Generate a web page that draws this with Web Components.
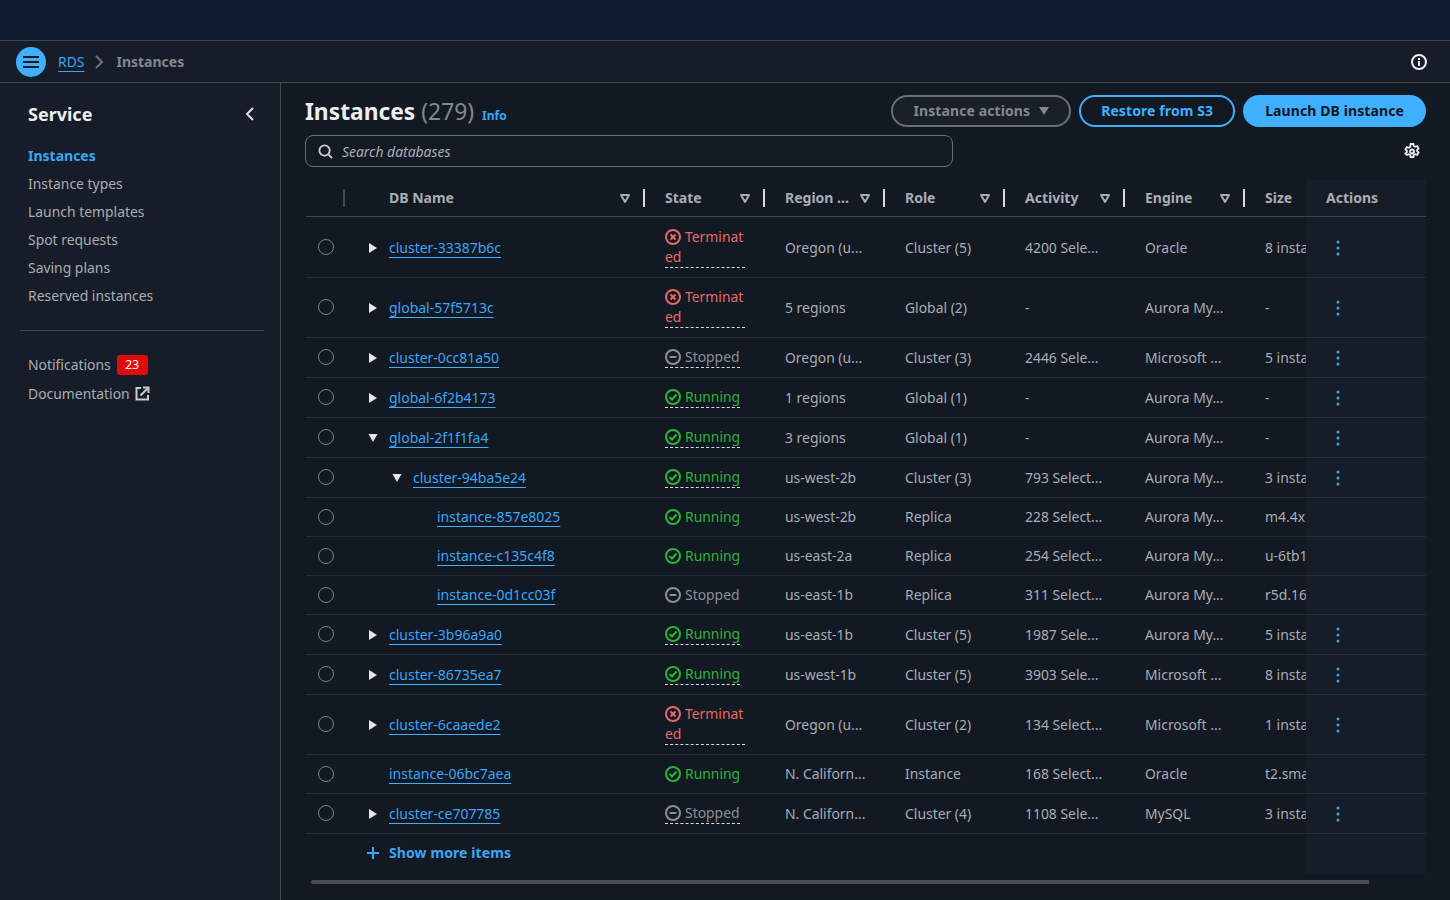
<!DOCTYPE html>
<html lang="en">
<head>
<meta charset="utf-8">
<title>Instances</title>
<style>
	html, body { margin:0; height:100%; background:#121923; overflow:hidden; }
	body { font-family:"Noto Sans", "Open Sans", sans-serif; font-size:13.92px; line-height:20px; color:#a9adb4; }
	app-shell { height:900px; }
</style>
</head>
<body>

<app-shell>
	<side-nav slot="nav"></side-nav>
	<page-header></page-header>
	<search-row></search-row>
	<db-table>
		<db-row name="cluster-33387b6c" caret="right" state="Terminated" tip region="Oregon (u..." role="Cluster (5)" activity="4200 Sele..." engine="Oracle" size="8 instances" menu></db-row>
		<db-row name="global-57f5713c" caret="right" state="Terminated" tip region="5 regions" role="Global (2)" activity="-" engine="Aurora My..." size="-" menu></db-row>
		<db-row name="cluster-0cc81a50" caret="right" state="Stopped" tip region="Oregon (u..." role="Cluster (3)" activity="2446 Sele..." engine="Microsoft ..." size="5 instances" menu></db-row>
		<db-row name="global-6f2b4173" caret="right" state="Running" tip region="1 regions" role="Global (1)" activity="-" engine="Aurora My..." size="-" menu></db-row>
		<db-row name="global-2f1f1fa4" caret="down" state="Running" tip region="3 regions" role="Global (1)" activity="-" engine="Aurora My..." size="-" menu></db-row>
		<db-row name="cluster-94ba5e24" level="1" caret="down" state="Running" tip region="us-west-2b" role="Cluster (3)" activity="793 Select..." engine="Aurora My..." size="3 instances" menu></db-row>
		<db-row name="instance-857e8025" level="2" state="Running" region="us-west-2b" role="Replica" activity="228 Select..." engine="Aurora My..." size="m4.4xlarge"></db-row>
		<db-row name="instance-c135c4f8" level="2" state="Running" region="us-east-2a" role="Replica" activity="254 Select..." engine="Aurora My..." size="u-6tb1.metal"></db-row>
		<db-row name="instance-0d1cc03f" level="2" state="Stopped" region="us-east-1b" role="Replica" activity="311 Select..." engine="Aurora My..." size="r5d.16xlarge"></db-row>
		<db-row name="cluster-3b96a9a0" caret="right" state="Running" tip region="us-east-1b" role="Cluster (5)" activity="1987 Sele..." engine="Aurora My..." size="5 instances" menu></db-row>
		<db-row name="cluster-86735ea7" caret="right" state="Running" tip region="us-west-1b" role="Cluster (5)" activity="3903 Sele..." engine="Microsoft ..." size="8 instances" menu></db-row>
		<db-row name="cluster-6caaede2" caret="right" state="Terminated" tip region="Oregon (u..." role="Cluster (2)" activity="134 Select..." engine="Microsoft ..." size="1 instance" menu></db-row>
		<db-row name="instance-06bc7aea" state="Running" region="N. Californ..." role="Instance" activity="168 Select..." engine="Oracle" size="t2.small"></db-row>
		<db-row name="cluster-ce707785" caret="right" state="Stopped" tip region="N. Californ..." role="Cluster (4)" activity="1108 Sele..." engine="MySQL" size="3 instances" menu></db-row>
	</db-table>
</app-shell>

<script>
	// shared column sizes, every table row uses the same grid
	const COLS = "39px 300px 120px 120px 120px 120px 120px 61px 120px";

	class AppShell extends HTMLElement {
		constructor() {
			super();
			this.attachShadow({mode:"open"}).innerHTML = `<style>
				:host { display:flex; flex-direction:column; height:100%; }
				.top { height:40px; flex:none; background:linear-gradient(#0e1a2c, #0f1b2e); border-bottom:1px solid #424650; }
				.crumbs { height:41px; flex:none; display:flex; align-items:center; padding:0 23px 0 16px; background:#171d28; border-bottom:1px solid #424650; }
				.burger { width:30px; height:30px; border-radius:50%; background:#3fb0ff; display:flex; align-items:center; justify-content:center; margin-right:12px; }
				a { color:#3aa6f5; text-decoration:underline; text-underline-offset:4px; }
				.sep { margin:0 12px 0 10px; display:flex; }
				b { color:#83878e; font-size:14px; font-weight:700; }
				.info { margin-left:auto; display:flex; }
				.body { flex:1; display:flex; min-height:0; }
				.main { flex:1; min-width:0; padding:12px 24px 0; display:flex; flex-direction:column; }
				nav { flex:none; width:280px; background:#171d28; border-right:1px solid #424650; }
			</style>
			<div class="top"></div>
			<div class="crumbs">
				<span class="burger"><svg width="18" height="14" viewBox="0 0 18 14"><path d="M1 2h16M1 7h16M1 12h16" stroke="#0f1722" stroke-width="2"/></svg></span>
				<a>RDS</a>
				<span class="sep"><svg width="10" height="14" viewBox="0 0 10 14"><path d="M2 1l6 6-6 6" fill="none" stroke="#6f737a" stroke-width="2"/></svg></span>
				<b>Instances</b>
				<span class="info"><svg width="16" height="16" viewBox="0 0 16 16"><circle cx="8" cy="8" r="7" fill="none" stroke="#eceef0" stroke-width="2"/><path d="M8 7v5" stroke="#eceef0" stroke-width="2"/><path d="M8 4v2" stroke="#eceef0" stroke-width="2"/></svg></span>
			</div>
			<div class="body">
				<nav><slot name="nav"></slot></nav>
				<div class="main"><slot></slot></div>
			</div>`;
		}
	}

	class SideNav extends HTMLElement {
		constructor() {
			super();
			this.attachShadow({mode:"open"}).innerHTML = `<style>
				:host { display:block; padding:19px 16px 0 20px; color:#a9adb4; }
				.head { display:flex; align-items:center; justify-content:space-between; padding:0 9px 0 8px; height:24px; margin-bottom:16px; }
				h2 { margin:0; font-size:18px; font-weight:700; color:#eceef0; }
				ul { list-style:none; margin:0; padding:0 0 0 8px; }
				li { height:28px; line-height:28px; }
				.on { color:#3aa6f5; font-size:14px; font-weight:700; }
				hr { border:0; border-top:1px solid #424650; margin:20px 0 19px; }
				.extra li { height:29px; line-height:29px; display:flex; align-items:center; }
				.badge { background:#e00b0b; color:#fff; font-size:12px; line-height:20px; width:31px; text-align:center; border-radius:3px; margin-left:6px; }
				svg { display:block; }
				.ext { margin-left:5px; }
			</style>
			<div class="head">
				<h2>Service</h2>
				<svg width="10" height="14" viewBox="0 0 10 14"><path d="M8 1L2 7l6 6" fill="none" stroke="#dfe1e4" stroke-width="2"/></svg>
			</div>
			<ul>
				<li class="on">Instances</li>
				<li>Instance types</li>
				<li>Launch templates</li>
				<li>Spot requests</li>
				<li>Saving plans</li>
				<li>Reserved instances</li>
			</ul>
			<hr>
			<ul class="extra">
				<li>Notifications <span class="badge">23</span></li>
				<li>Documentation <svg class="ext" width="15" height="15" viewBox="0 0 15 15" fill="none" stroke="#c9ccd0" stroke-width="2"><path d="M6 2H1.500v11.500H13V9"/><path d="M5.500 9.500l7-7"/><path d="M8 1.500h5.500V7"/></svg></li>
			</ul>`;
		}
	}

	class PageHeader extends HTMLElement {
		constructor() {
			super();
			this.attachShadow({mode:"open"}).innerHTML = `<style>
				:host { display:flex; align-items:center; height:32px; flex:none; }
				h1 { margin:0; padding-top:2px; font-size:22.800px; line-height:30px; font-weight:700; color:#eceef0; }
				h1 span { font-weight:400; color:#83878e; }
				.info { color:#3aa6f5; font-size:12px; font-weight:700; margin:9px auto 0 8px; }
				button { font:inherit; font-size:14px; font-weight:700; letter-spacing:.1px; height:32px; border-radius:16px; padding:0 20px; margin-left:8px; border:2px solid; background:transparent; display:flex; align-items:center; box-sizing:border-box; }
				.dis { color:#83878e; border-color:#6b6f76; background:#1a2029; padding-right:19px; }
				.dis svg { margin-left:8px; }
				.line { color:#3fb0ff; border-color:#3fb0ff; }
				.fill { color:#0f1722; border-color:#3fb0ff; background:#3fb0ff; }
			</style>
			<h1>Instances <span>(279)</span></h1>
			<span class="info">Info</span>
			<button class="dis">Instance actions<svg width="12" height="10" viewBox="0 0 12 10"><path d="M1 1h10L6 9z" fill="#83878e"/></svg></button>
			<button class="line">Restore from S3</button>
			<button class="fill">Launch DB instance</button>`;
		}
	}

	class SearchRow extends HTMLElement {
		constructor() {
			super();
			this.attachShadow({mode:"open"}).innerHTML = `<style>
				:host { display:flex; align-items:center; justify-content:space-between; margin-top:8px; height:32px; flex:none; }
				.box { width:648px; height:32px; box-sizing:border-box; border:1px solid #6b6f76; border-radius:8px; background:#141a24; display:flex; align-items:center; padding:1px 0 0 12px; color:#a9adb4; font-style:italic; }
				.box svg { margin:-1px 9px 0 0; }
				.gear { margin-right:6px; display:block; }
			</style>
			<div class="box">
				<svg width="15" height="15" viewBox="0 0 16 16" fill="none" stroke="#c9ccd0" stroke-width="2"><circle cx="7" cy="7" r="5.500"/><path d="M11 11l4 4"/></svg>
				Search databases
			</div>
			<svg class="gear" width="16" height="16" viewBox="0 0 16 16" fill="none" stroke="#eceef0" stroke-width="1.800"><path d="M6.600 1h2.800l.4 2 1.500.8 1.900-.7 1.400 2.400-1.500 1.300v1.400l1.500 1.300-1.400 2.400-1.900-.7-1.500.8-.4 2H6.600l-.4-2-1.500-.8-1.900.7L1.400 10.500l1.500-1.300V7.800L1.400 6.500l1.400-2.400 1.900.7 1.500-.8z"/><circle cx="8" cy="8.500" r="2"/></svg>`;
		}
	}

	class DbTable extends HTMLElement {
		constructor() {
			super();
			const heads = [["State"], ["Region ..."], ["Role"], ["Activity"], ["Engine"]]
				.map(h => `<div class="th"><span>${h[0]}</span>${DbTable.filterIcon}<i></i></div>`).join("");
			this.attachShadow({mode:"open"}).innerHTML = `<style>
				:host { display:block; margin-top:13px; margin-left:1px; flex:none; }
				.head, .more { display:grid; grid-template-columns:${COLS}; font-size:14px; }
				.head { height:37px; box-sizing:border-box; border-bottom:1px solid #424650; font-weight:700; color:#a9adb4; }
				.th { display:flex; align-items:center; padding-left:20px; min-width:0; overflow:hidden; }
				.th span { flex:1; white-space:nowrap; overflow:hidden; }
				.th svg { flex:none; margin-left:10px; }
				.th i { flex:none; width:2px; height:18px; background:#d9dbde; margin-left:13px; }
				.sel { display:flex; align-items:center; justify-content:flex-end; }
				.sel i { width:2px; height:18px; background:#424650; }
				.name { padding-left:44px; }
				.act { background:#171d28; display:flex; align-items:center; padding-left:20px; }
				.rows { padding-top:1px; }
				.more { height:40px; font-weight:700; color:#3aa6f5; }
				.more .txt { grid-column:1 / 8; display:flex; align-items:center; padding:0 0 2px 60px; letter-spacing:.1px; }
				.more svg { margin-right:9px; }
				.bar { height:4px; margin:6px 57px 0 5px; background:#4a4c50; border-radius:4px 0 0 4px; }
			</style>
			<div class="head">
				<div class="sel"><i></i></div>
				<div class="th name"><span>DB Name</span>${DbTable.filterIcon}<i></i></div>
				${heads}
				<div class="th"><span>Size</span></div>
				<div class="act">Actions</div>
			</div>
			<div class="rows"><slot></slot></div>
			<div class="more">
				<div class="txt"><svg width="14" height="14" viewBox="0 0 14 14"><path d="M7 1v12M1 7h12" stroke="#3aa6f5" stroke-width="2"/></svg>Show more items</div>
				<div></div>
				<div class="act"></div>
			</div>
			<div class="bar"></div>`;
		}
		static get filterIcon() {
			return `<svg width="10" height="9" viewBox="0 0 10 9"><path d="M1 1h8L5 8z" fill="none" stroke="#a9adb4" stroke-width="2" stroke-linejoin="round"/></svg>`;
		}
	}

	class StatusMark extends HTMLElement {
		static get icons() {
			return {
				Terminated:{c:"#e86868", p:`<path d="M5.500 5.500l5 5M10.500 5.500l-5 5" stroke-width="2"/>`},
				Running:{c:"#2bb534", p:`<path d="M4.500 8l2.500 2.500 4.500-5" stroke-width="2"/>`},
				Stopped:{c:"#8d9096", p:`<path d="M4.500 8h7" stroke-width="2"/>`}
			};
		}
		constructor() {
			super();
			this.attachShadow({mode:"open"});
		}
		connectedCallback() {
			const label = this.getAttribute("label");
			const ic = StatusMark.icons[label];
			this.shadowRoot.innerHTML = `<style>
				:host { display:inline-block; max-width:100%; color:${ic.c}; word-break:break-all; }
				:host([tip]) { border-bottom:1px dashed #d9dbde; }
				svg { vertical-align:-3px; margin-right:4px; }
			</style><svg width="16" height="16" viewBox="0 0 16 16" fill="none" stroke="${ic.c}"><circle cx="8" cy="8" r="7" stroke-width="2"/>${ic.p}</svg>${label}`;
		}
	}

	class DbRow extends HTMLElement {
		constructor() {
			super();
			this.attachShadow({mode:"open"});
		}
		connectedCallback() {
			const a = n => this.getAttribute(n) || "";
			const level = parseInt(a("level") || "0");
			let caret = "";
			if (a("caret")=="right") caret = `<svg width="16" height="16" viewBox="0 0 16 16"><path d="M4 3l8 5-8 5z" fill="#e4e6e8"/></svg>`;
			if (a("caret")=="down") caret = `<svg width="16" height="16" viewBox="0 0 16 16"><path d="M3.500 4h9L8 12z" fill="#e4e6e8"/></svg>`;
			const tip = this.hasAttribute("tip") ? "tip" : "";
			const menu = this.hasAttribute("menu") ? `<svg width="24" height="16" viewBox="0 0 24 16"><path d="M12 2v.100M12 8v.100M12 14v.100" stroke="#3aa6f5" stroke-width="3" stroke-linecap="round"/></svg>` : "";
			this.shadowRoot.innerHTML = `<style>
				:host { display:grid; grid-template-columns:${COLS}; border-bottom:1px solid #262c36; }
				.td { display:flex; align-items:center; padding:9px 0 9px 20px; min-width:0; white-space:nowrap; overflow:hidden; }
				.radio { padding:0 0 ${tip ? 1 : 0}px 12px; }
				.radio i { width:14px; height:14px; border:1px solid #7d8086; border-radius:50%; }
				.name { padding-left:${20 + level*24}px; }
				.slot { flex:none; width:24px; height:16px; }
				a { font-size:13.970px; color:#3aa6f5; text-decoration:underline; text-decoration-color:#3fb0ff; text-underline-offset:4px; text-decoration-skip-ink:none; text-decoration-thickness:1px; }
				.state { white-space:normal; padding-right:20px; }
				.act { background:#171d28; padding:0 0 0 20px; }
				svg { display:block; }
			</style>
			<div class="td radio"><i></i></div>
			<div class="td name"><span class="slot">${caret}</span><a>${a("name")}</a></div>
			<div class="td state"><status-mark label="${a("state")}" ${tip}></status-mark></div>
			<div class="td">${a("region")}</div>
			<div class="td">${a("role")}</div>
			<div class="td">${a("activity")}</div>
			<div class="td">${a("engine")}</div>
			<div class="td">${a("size")}</div>
			<div class="td act">${menu}</div>`;
		}
	}

	customElements.define("app-shell", AppShell);
	customElements.define("side-nav", SideNav);
	customElements.define("page-header", PageHeader);
	customElements.define("search-row", SearchRow);
	customElements.define("status-mark", StatusMark);
	customElements.define("db-row", DbRow);
	customElements.define("db-table", DbTable);
</script>
</body>
</html>
